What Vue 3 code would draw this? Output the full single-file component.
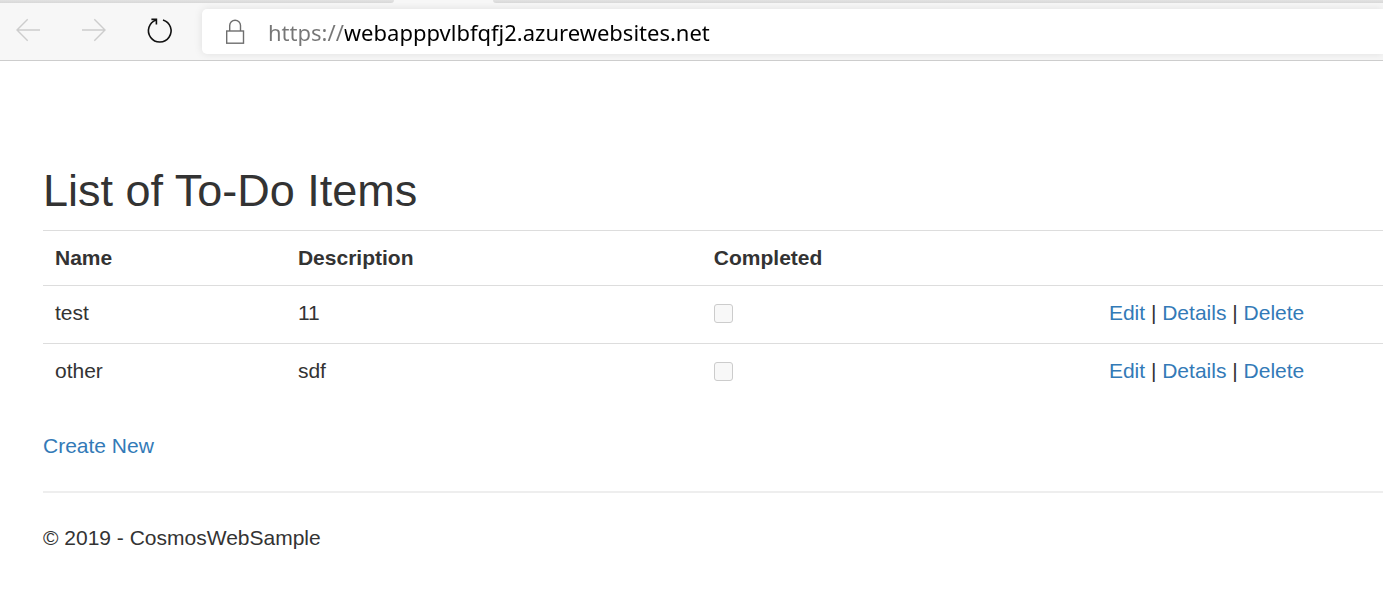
<script setup>
import { ref } from 'vue'

const address = ref('https://webapppvlbfqfj2.azurewebsites.net')
const items = ref([
  { id: 1, name: 'test', description: '11', completed: false },
  { id: 2, name: 'other', description: 'sdf', completed: false },
])
</script>

<template>
  <div class="browser">
    <header class="chrome">
      <div class="tabs">
        <span class="tab tab-before"></span>
        <span class="tab-active"></span>
        <span class="tab tab-after"></span>
      </div>
      <div class="toolbar">
        <nav class="nav" aria-label="Browser navigation">
          <button type="button" class="nav-btn" aria-label="Back" disabled>
            <svg width="28" height="28" viewBox="0 0 28 28" fill="none" stroke="#cdcdcd" stroke-width="1.4">
              <path d="M26 14H3M13.7 3.3L3 14L13.7 24.7" />
            </svg>
          </button>
          <button type="button" class="nav-btn" aria-label="Forward" disabled>
            <svg width="28" height="28" viewBox="0 0 28 28" fill="none" stroke="#cdcdcd" stroke-width="1.4">
              <path d="M2 14H25M14.3 3.3L25 14L14.3 24.7" />
            </svg>
          </button>
          <button type="button" class="nav-btn" aria-label="Refresh">
            <svg width="28" height="28" viewBox="0 0 28 28" fill="none" stroke="#111" stroke-width="1.6">
              <path d="M17 3.9A11.3 11.3 0 1 1 10.2 4" />
              <path d="M5.4 3.4H10.4V8.6" />
            </svg>
          </button>
        </nav>
        <div class="address">
          <svg class="lock" width="20" height="26" viewBox="0 0 20 26" fill="none" stroke="#6e6e6e" stroke-width="1.4">
            <rect x="1.7" y="12" width="16.8" height="12.2" />
            <path d="M4.7 12V6.6A5.4 5.4 0 0 1 15.5 6.6V12" />
          </svg>
          <input v-model="address" class="url" type="text" aria-label="Address" spellcheck="false" />
        </div>
      </div>
    </header>

    <main class="page">
      <h2>List of To-Do Items</h2>
      <table>
        <thead>
          <tr>
            <th class="col-name" scope="col">Name</th>
            <th class="col-description" scope="col">Description</th>
            <th class="col-completed" scope="col">Completed</th>
            <th></th>
          </tr>
        </thead>
        <tbody>
          <tr v-for="item in items" :key="item.id">
            <td>{{ item.name }}</td>
            <td>{{ item.description }}</td>
            <td>
              <input v-model="item.completed" class="check" type="checkbox" :aria-label="`${item.name} completed`" disabled />
            </td>
            <td>
              <a href="#edit">Edit</a> | <a href="#details">Details</a> | <a href="#delete">Delete</a>
            </td>
          </tr>
        </tbody>
      </table>
      <p><a href="#create">Create New</a></p>
      <hr />
      <footer>© 2019 - CosmosWebSample</footer>
    </main>
  </div>
</template>

<style>
body {
  background: #fff;
}
</style>

<style scoped>
.browser {
  font-family: "Liberation Sans", Arial, sans-serif;
  font-size: 21px;
  line-height: 30px;
  color: #333;
}

.chrome {
  background: #f7f7f7;
  border-bottom: 1px solid #cdcdcd;
}

.tabs {
  display: flex;
  height: 3px;
}

.tab {
  background: linear-gradient(#e2e2e2, #d8d8d8);
}

.tab-before {
  width: 394px;
  border-bottom-right-radius: 3px;
}

.tab-active {
  width: 99px;
}

.tab-after {
  flex: 1;
  border-bottom-left-radius: 3px;
}

.toolbar {
  display: flex;
  padding: 6px 0;
}

.nav {
  display: flex;
  align-items: center;
  gap: 38px;
  padding: 0 28px 3px 14px;
}

.nav-btn {
  display: flex;
  padding: 0;
  border: 0;
  background: none;
}

.address {
  flex: 1;
  display: flex;
  align-items: center;
  gap: 23px;
  height: 45px;
  padding-left: 23px;
  background: #fff;
  border-radius: 5px 0 0 5px;
  box-shadow: 0 0 8px rgba(0, 0, 0, 0.1);
  clip-path: inset(-6px 0 -6px -8px);
}

.url {
  flex: 1;
  min-width: 0;
  padding: 0;
  border: 0;
  outline: 0;
  font: 22px/32px "Noto Sans", "Open Sans", sans-serif;
  color: transparent;
  caret-color: #000;
  background: linear-gradient(90deg, #767676 77px, #000 77px);
  background-clip: text;
}

.page {
  padding: 105px 0 46px 43px;
}

h2 {
  margin: 0 0 14px;
  font-size: 45px;
  font-weight: 400;
  line-height: 50px;
}

table {
  width: 100%;
  table-layout: fixed;
  border-collapse: separate;
  border-spacing: 0;
}

th,
td {
  box-sizing: border-box;
  padding: 12px;
  border-top: 1px solid #ddd;
  text-align: left;
  vertical-align: top;
}

td {
  height: 58px;
}

.col-name {
  width: 18.13%;
}

.col-description {
  width: 31.04%;
}

.col-completed {
  width: 29.48%;
}

.check {
  appearance: none;
  display: block;
  width: 19px;
  height: 19px;
  margin: 6px 0 0;
  border: 1px solid #ccc;
  border-radius: 3px;
  background: #f8f8f8;
}

a {
  color: #337ab7;
  text-decoration: none;
}

p {
  margin: 30px 0 0;
}

hr {
  height: 2px;
  margin: 30px 0;
  border: 0;
  background: #eee;
}
</style>
